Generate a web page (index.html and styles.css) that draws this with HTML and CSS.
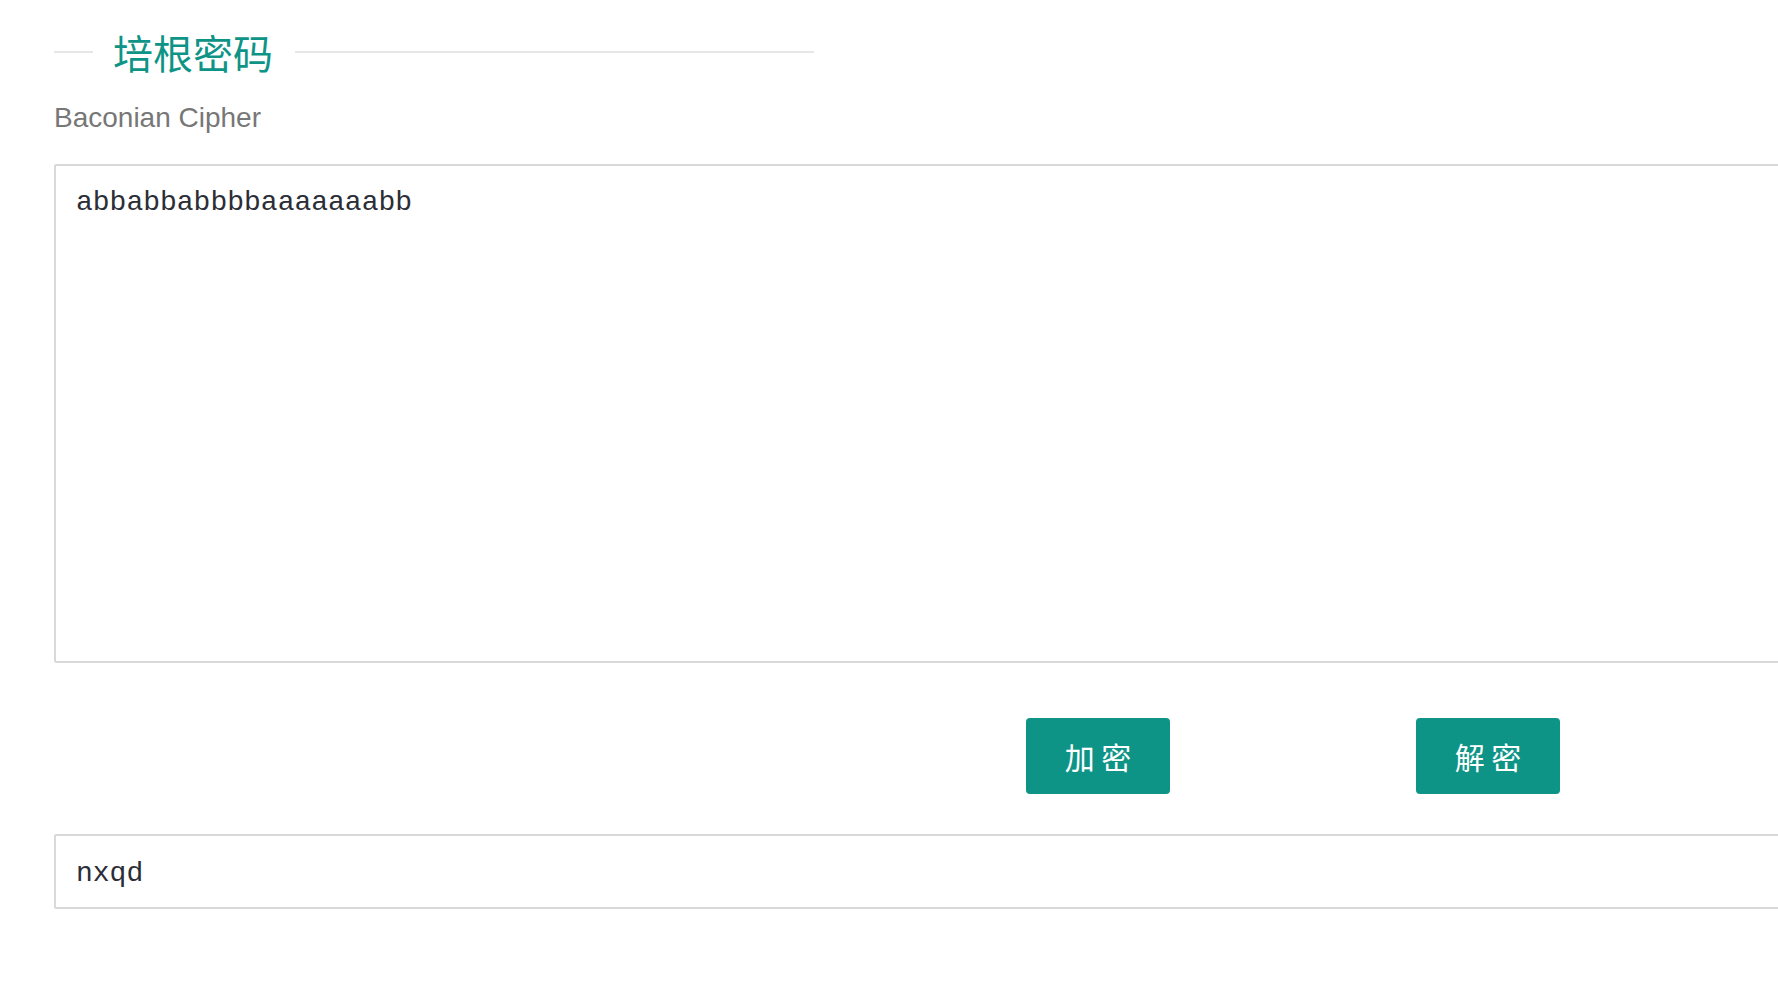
FILE: index.html
```html
<!DOCTYPE html>
<html lang="zh-CN">
<head>
    <meta charset="UTF-8">
    <meta name="viewport" content="width=device-width, initial-scale=1.0">
    <title>培根密码</title>
    <link rel="stylesheet" href="styles.css">
</head>
<body>
    <div class="page">
        <div class="field-title">
            <span class="line line-short"></span>
            <h1>培根密码</h1>
            <span class="line line-long"></span>
        </div>
        <p class="subtitle">Baconian Cipher</p>

        <textarea id="source" class="source" spellcheck="false">abbabbabbbbaaaaaaabb</textarea>

        <div class="actions">
            <button type="button" class="btn">加 密</button>
            <button type="button" class="btn">解 密</button>
        </div>

        <input type="text" id="result" class="result" value="nxqd" spellcheck="false">
    </div>
</body>
</html>
```

FILE: styles.css
```css
html, body {
    overflow-x: hidden;
}
body {
    margin: 0;
    padding: 0;
    background-color: #fff;
    font-family: "Liberation Sans", Arial, "Noto Sans CJK SC", sans-serif;
}
.page {
    padding: 26px 0 0 54px;
    width: 1960px;
}
.field-title {
    display: flex;
    align-items: center;
    width: 760px;
}
.line {
    height: 2px;
    background-color: #e6e6e6;
}
.line-short {
    width: 39px;
}
.line-long {
    flex: 1;
}
.field-title h1 {
    margin: 0;
    padding: 0 22px 0 20px;
    font-family: "Noto Sans CJK SC", sans-serif;
    font-size: 40px;
    font-weight: normal;
    line-height: 52px;
    color: #0e9486;
}
.subtitle {
    margin: 20px 0 0 0;
    font-size: 28px;
    line-height: 40px;
    color: #777;
}
.source {
    display: block;
    box-sizing: border-box;
    width: 100%;
    height: 499px;
    margin-top: 26px;
    padding: 17px 20px 12px 20px;
    border: 2px solid #d9d9d9;
    border-radius: 2px;
    font-family: "Liberation Mono", "Courier New", monospace;
    font-size: 28px;
    line-height: 40px;
    color: #2b2e36;
    resize: none;
    outline: none;
}
.actions {
    display: flex;
    gap: 246px;
    padding-left: 972px;
    margin-top: 55px;
}
.btn {
    width: 144px;
    height: 76px;
    border: none;
    border-radius: 4px;
    background-color: #0e9486;
    color: #fff;
    font-family: "Noto Sans CJK SC", sans-serif;
    font-size: 30px;
    cursor: pointer;
}
.btn:hover {
    opacity: 0.8;
}
.result {
    display: block;
    box-sizing: border-box;
    width: 100%;
    height: 75px;
    margin-top: 40px;
    padding: 3px 20px 0 20px;
    border: 2px solid #d9d9d9;
    border-radius: 2px;
    font-family: "Liberation Mono", "Courier New", monospace;
    font-size: 28px;
    color: #2b2e36;
    outline: none;
}
```
